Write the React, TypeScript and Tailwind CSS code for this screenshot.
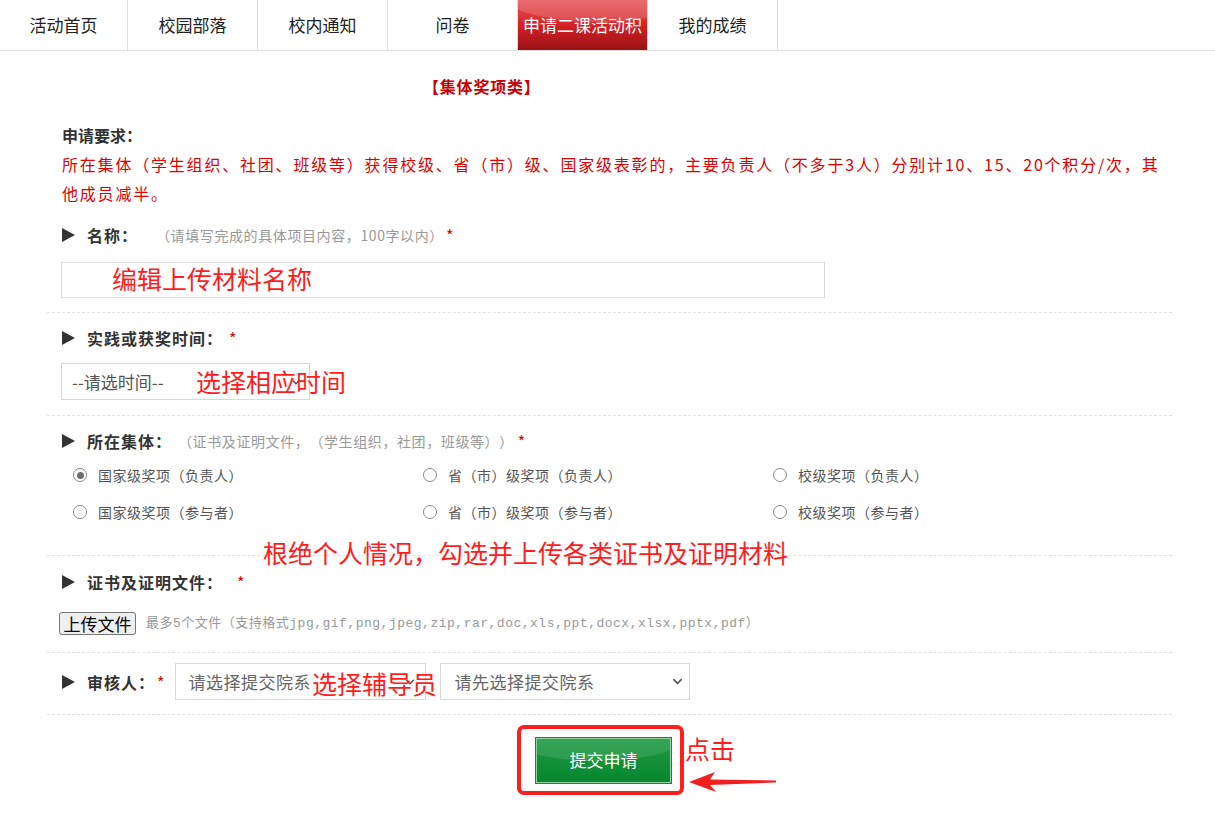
import React from "react";
import { ChevronDown } from "lucide-react";

const FONT = { fontFamily: '"Noto Sans CJK SC", "Noto Sans", sans-serif' };

function Tri() {
  return (
    <svg width="13" height="14" viewBox="0 0 13 14" className="shrink-0">
      <polygon points="0,0 13,7 0,14" fill="#333" />
    </svg>
  );
}

function Radio({ checked, label }: { checked?: boolean; label: string }) {
  return (
    <div className="flex items-center h-[24px]">
      <span className="w-[14px] h-[14px] rounded-full border border-[#8a8a8a] bg-white flex items-center justify-center shrink-0">
        {checked && <span className="w-[7px] h-[7px] rounded-full bg-[#6e6e6e]" />}
      </span>
      <span className="ml-[11px] text-[14px] tracking-[0.5px] text-[#555]">{label}</span>
    </div>
  );
}

const tabs = ["活动首页", "校园部落", "校内通知", "问卷", "申请二课活动积", "我的成绩"];

export default function App() {
  return (
    <div className="relative w-[1215px] min-h-[820px] bg-white text-[#333] [text-spacing-trim:space-all]" style={FONT}>
      {/* nav */}
      <div className="flex h-[51px] border-b border-[#dedede]">
        {tabs.map((t, i) => {
          const active = i === 4;
          return (
            <div
              key={t}
              className={`${i === 0 ? "w-[128px]" : "w-[130px]"} h-[50px] border-r border-[#dedede] shrink-0`}
            >
              {active ? (
                <div className="relative h-full overflow-hidden bg-linear-to-b from-[#e65257] via-[#d42126] to-[#9a1216]">
                  <div className="absolute -left-[20px] -top-[40px] w-[200px] h-[62px] rounded-[50%] bg-white/15" />
                  <div className="relative h-full flex items-center justify-center text-[17px] text-white whitespace-nowrap">
                    {t}
                  </div>
                </div>
              ) : (
                <div className="h-full flex items-center justify-center text-[17px] text-[#222]">{t}</div>
              )}
            </div>
          );
        })}
      </div>

      <div className="ml-[47px] w-[1125px]">
        <div className="mt-[23px] ml-[376px] leading-[24px] text-[16px] font-bold tracking-[0.8px] text-[#c80000]">【集体奖项类】</div>

        <div className="mt-[23px] px-[15px]">
          <div className="leading-[29px] text-[16px] font-bold text-[#333]">申请要求：</div>
          <p className="leading-[29px] text-[16px] tracking-[1.8px] text-[#e00000] whitespace-nowrap">
            所在集体（学生组织、社团、班级等）获得校级、省（市）级、国家级表彰的，主要负责人（不多于3人）分别计10、15、20个积分/次，其
            <br />
            他成员减半。
          </p>
        </div>

        {/* 名称 */}
        <div className="px-[15px] pt-[12px] pb-[14px] border-b border-dashed border-[#e3e3e3]">
          <div className="flex items-center h-[30px]">
            <Tri />
            <span className="ml-[12px] text-[16px] font-bold tracking-[1px]">名称：</span>
            <span className="ml-[18px] text-[14px] tracking-[0.6px] text-[#999]">（请填写完成的具体项目内容，100字以内）</span>
            <span className="ml-[2px] text-[16px] text-[#e00000]">*</span>
          </div>
          <div className="mt-[12px] -ml-[1px] w-[764px] h-[36px] border border-[#dcdcdc]" />
        </div>

        {/* 时间 */}
        <div className="px-[15px] pt-[10px] pb-[15px] border-b border-dashed border-[#e3e3e3]">
          <div className="flex items-center h-[30px]">
            <Tri />
            <span className="ml-[12px] text-[16px] font-bold tracking-[1px]">实践或获奖时间：</span>
            <span className="ml-[6px] text-[16px] text-[#e00000]">*</span>
          </div>
          <div className="mt-[10px] -ml-[1px] w-[249px] h-[37px] border border-[#d8d8d8] flex items-center justify-between pl-[10px] pr-[6px]">
            <span className="text-[17px] text-[#555]">--请选时间--</span>
            <ChevronDown size={14} strokeWidth={2.5} color="#555" />
          </div>
        </div>

        {/* 所在集体 */}
        <div className="px-[15px] pt-[10px] pb-[31px] border-b border-dashed border-[#e3e3e3]">
          <div className="flex items-center h-[30px]">
            <Tri />
            <span className="ml-[12px] text-[16px] font-bold tracking-[1px]">所在集体：</span>
            <span className="ml-[6px] text-[14px] tracking-[0.6px] text-[#999]">（证书及证明文件，（学生组织，社团，班级等））</span>
            <span className="ml-[4px] text-[16px] text-[#e00000]">*</span>
          </div>
          <div className="mt-[7px] pl-[11px] grid grid-cols-[350px_350px_350px] gap-y-[13px]">
            <Radio checked label="国家级奖项（负责人）" />
            <Radio label="省（市）级奖项（负责人）" />
            <Radio label="校级奖项（负责人）" />
            <Radio label="国家级奖项（参与者）" />
            <Radio label="省（市）级奖项（参与者）" />
            <Radio label="校级奖项（参与者）" />
          </div>
        </div>

        {/* 证书 */}
        <div className="px-[15px] pt-[11px] pb-[17px] border-b border-dashed border-[#e3e3e3]">
          <div className="flex items-center h-[30px]">
            <Tri />
            <span className="ml-[12px] text-[16px] font-bold tracking-[1px]">证书及证明文件：</span>
            <span className="ml-[14px] text-[16px] text-[#e00000]">*</span>
          </div>
          <div className="mt-[15px] flex items-center">
            <div className="-ml-[3px] w-[77px] h-[23px] flex items-center justify-center bg-[#efefef] border border-[#767676] rounded-[3px] text-[17px] leading-none text-black">
              上传文件
            </div>
            <span
              className="ml-[10px] text-[13px] tracking-[0.5px] text-[#999]"
              style={{ fontFamily: '"Liberation Mono", "Noto Sans CJK SC", monospace' }}
            >
              最多5个文件（支持格式jpg,gif,png,jpeg,zip,rar,doc,xls,ppt,docx,xlsx,pptx,pdf）
            </span>
          </div>
        </div>

        {/* 审核人 */}
        <div className="px-[15px] pt-[10px] pb-[14px] border-b border-dashed border-[#e3e3e3]">
          <div className="flex items-center h-[37px]">
            <Tri />
            <span className="ml-[12px] text-[16px] font-bold tracking-[1px]">审核人：</span>
            <span className="ml-[2px] text-[16px] text-[#e00000]">*</span>
            <div className="ml-[10px] w-[251px] h-[37px] border border-[#dadada] flex items-center justify-between pl-[13px] pr-[8px]">
              <span className="text-[17px] tracking-[0.5px] text-[#666]">请选择提交院系</span>
              <ChevronDown size={14} strokeWidth={2.5} color="#555" />
            </div>
            <div className="ml-[14px] w-[250px] h-[37px] border border-[#dadada] flex items-center justify-between pl-[14px] pr-[4px]">
              <span className="text-[17px] tracking-[0.5px] text-[#666]">请先选择提交院系</span>
              <ChevronDown size={15} strokeWidth={2.5} color="#555" />
            </div>
          </div>
        </div>

        {/* submit */}
        <div className="mt-[10px] flex">
          <div className="ml-[470px] w-[167px] h-[70px] border-[4px] border-[#ff1e1e] rounded-[7px] flex items-center pl-[14px]">
            <div className="w-[137px] h-[47px] border border-[#3f6f45] p-[1px] bg-[#8fd49a]">
              <div className="relative w-full h-full overflow-hidden bg-linear-to-b from-[#1f9a45] to-[#06862f] flex items-center justify-center">
                <div className="absolute -left-[30px] -top-[30px] w-[180px] h-[52px] rounded-[50%] bg-white/10" />
                <span className="relative text-[17px] text-white">提交申请</span>
              </div>
            </div>
          </div>
        </div>
      </div>

      {/* annotations overlaid */}
      <div className="absolute left-[112px] top-[264px] text-[25px] leading-[28px] text-[#ff1c1c]">编辑上传材料名称</div>
      <div className="absolute left-[196px] top-[367px] text-[25px] leading-[28px] text-[#ff1c1c]">选择相应时间</div>
      <div className="absolute left-[263px] top-[538px] text-[25px] leading-[28px] text-[#ff1c1c]">根绝个人情况，勾选并上传各类证书及证明材料</div>
      <div className="absolute left-[312px] top-[669px] text-[25px] leading-[28px] text-[#ff1c1c]">选择辅导员</div>
      <div className="absolute left-[685px] top-[734px] text-[25px] leading-[28px] text-[#ff1c1c]">点击</div>
      <svg className="absolute left-[688px] top-[771px]" width="90" height="24" viewBox="0 0 90 24">
        <polygon points="1,11 27,1 22,8.5 88,9.5 88,11.5 22,14 28,21" fill="#f02020" />
      </svg>
    </div>
  );
}
